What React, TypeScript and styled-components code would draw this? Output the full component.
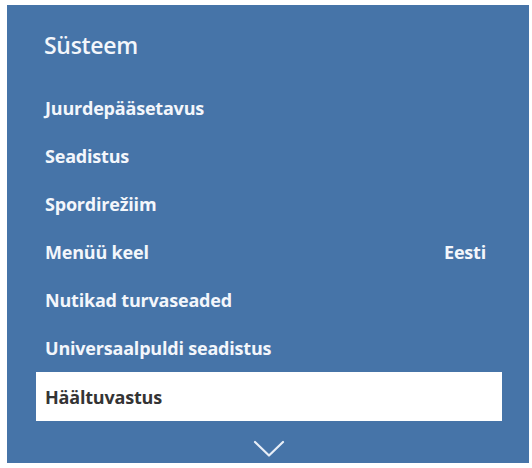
import React, { FC, ReactElement } from "react";
import styled, { createGlobalStyle } from "styled-components";

const GlobalStyle = createGlobalStyle`
  html, body {
    margin: 0;
    padding: 0;
    background: #ffffff;
  }
`;

type Item = { label: string; value?: string };

const items: Item[] = [
  { label: "Juurdepääsetavus" },
  { label: "Seadistus" },
  { label: "Spordirežiim" },
  { label: "Menüü keel", value: "Eesti" },
  { label: "Nutikad turvaseaded" },
  { label: "Universaalpuldi seadistus" },
  { label: "Häältuvastus" },
];

const SystemMenu: FC = (): ReactElement => {
  const focused = items.length - 1;

  return (
    <Panel>
      <GlobalStyle />
      <Title>Süsteem</Title>
      <List>
        {items.map((item, i) => (
          <Row key={item.label} $focused={i === focused}>
            <Label>{item.label}</Label>
            {item.value ? <Value>{item.value}</Value> : null}
          </Row>
        ))}
      </List>
      <More>
        <svg width="32" height="18" viewBox="0 0 32 18" fill="none">
          <path
            d="M2 2 L16 15.5 L30 2"
            stroke="#e8eef7"
            strokeWidth="2.2"
            strokeLinecap="round"
            strokeLinejoin="round"
          />
        </svg>
      </More>
    </Panel>
  );
};

export default SystemMenu;

const Panel = styled.main`
  margin: 5px 0 0 7px;
  width: 522px;
  height: 458px;
  box-sizing: border-box;
  background-color: #4674a8;
  padding: 0 27px 0 29px;
  display: flex;
  flex-direction: column;
  font-family: "Open Sans", "Noto Sans", sans-serif;
  color: #f3f6fb;
`;

const Title = styled.h1`
  margin: 0;
  height: 79px;
  padding-left: 8px;
  display: flex;
  align-items: center;
  font-size: 23px;
  font-weight: 600;
  letter-spacing: -0.3px;
`;

const List = styled.ul`
  list-style: none;
  margin: 0;
  padding: 0;
  display: flex;
  flex-direction: column;
`;

const Row = styled.li<{ $focused?: boolean }>`
  height: ${(p) => (p.$focused ? "49px" : "48px")};
  padding: 0 16px 0 9px;
  display: flex;
  align-items: center;
  justify-content: space-between;
  font-size: 18px;
  font-weight: 700;
  letter-spacing: -0.2px;
  background-color: ${(p) => (p.$focused ? "#ffffff" : "transparent")};
  color: ${(p) => (p.$focused ? "#343434" : "inherit")};
`;

const Label = styled.span``;

const Value = styled.span``;

const More = styled.div`
  flex: 1;
  display: flex;
  align-items: center;
  justify-content: center;
  padding-top: 14px;
`;
